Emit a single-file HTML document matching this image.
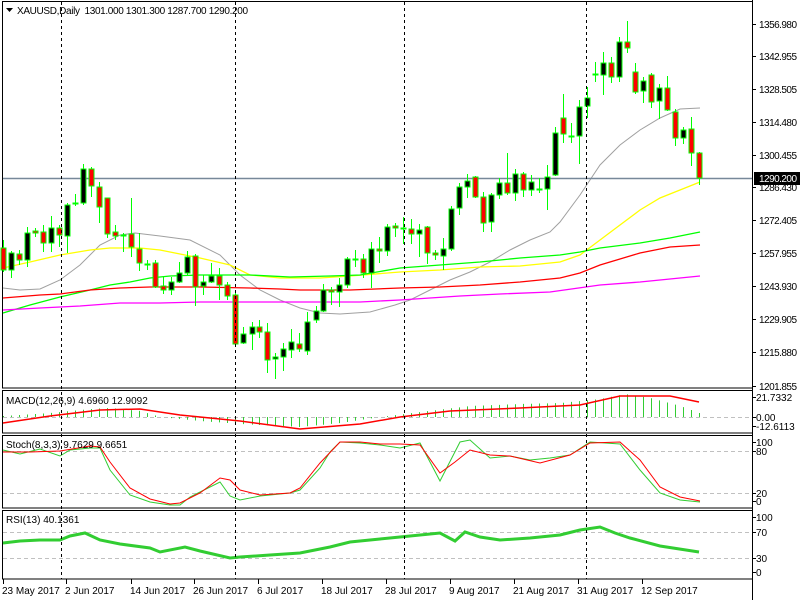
<!DOCTYPE html>
<html><head><meta charset="utf-8">
<style>
html,body{margin:0;padding:0;background:#fff;width:800px;height:600px;overflow:hidden}
svg{display:block}
text{font-family:"Liberation Sans",sans-serif;font-size:10px;fill:#000}
</style></head>
<body>
<svg id="s" width="800" height="600" xmlns="http://www.w3.org/2000/svg">
</svg>
<script>
const S=document.getElementById('s');let h='';
function pl(pts,col,w,extra){h+=`<polyline fill="none" stroke="${col}" stroke-width="${w}" ${extra||''} points="${pts.map(p=>p.join(',')).join(' ')}"/>`;}
function ln(x1,y1,x2,y2,col,w,extra){h+=`<line x1="${x1}" y1="${y1}" x2="${x2}" y2="${y2}" stroke="${col}" stroke-width="${w||1}" ${extra||''}/>`;}
function tx(x,y,t,extra){h+=`<text x="${x}" y="${y}" ${extra||''}>${t}</text>`;}
[[2.5,1.5,388],[2.5,390.5,433],[2.5,435.5,508],[2.5,510.5,579]].forEach(p=>{h+=`<rect x="${p[0]}" y="${p[1]}" width="750" height="${p[2]-p[1]}" fill="none" stroke="#000" stroke-width="1"/>`;});
[[0,532],[0,558],[0,451],[0,493],[0,417]].forEach(g=>ln(3,g[1]+.5,752,g[1]+.5,'#c0c0c0',1,'stroke-dasharray="4,3"'));
pl([[3,288],[20,290],[40,289],[60,280],[80,265],[100,245],[120,235],[135,233],[160,236],[190,240],[220,255],[240,275],[260,290],[280,300],[300,308],[320,313],[340,314],[370,312],[395,305],[410,300],[430,290],[450,280],[470,272],[490,262],[510,250],[530,240],[550,232],[560,222],[580,195],[590,180],[600,165],[620,145],[640,130],[660,118],[680,109],[700,108]],'#a0a0a0',1);
pl([[3,268],[30,262],[60,255],[90,250],[110,248],[140,248],[160,250],[200,258],[230,265],[250,275],[280,278],[320,278],[350,276],[400,272],[440,270],[480,267],[520,266],[560,262],[580,255],[600,240],[620,225],[640,210],[660,198],[680,190],[700,182]],'#ffff00',1.3);
pl([[3,313],[30,305],[60,297],[90,290],[110,285],[130,282],[150,278],[170,276],[200,275],[250,275],[290,277],[330,276],[360,275],[400,268],[440,265],[480,262],[520,258],[560,255],[580,252],[600,248],[640,243],[670,238],[700,232]],'#00ff00',1.3);
pl([[3,298],[40,295],[60,294],[90,290],[120,288],[150,287],[200,287],[250,288],[280,289],[300,290],[350,290],[400,288],[440,287],[480,285],[520,282],[560,278],[580,273],[600,265],[640,253],[670,247],[700,245]],'#ff0000',1.3);
pl([[3,310],[40,308],[80,306],[120,303],[160,303],[200,302],[250,302],[300,302],[360,302],[400,300],[430,298],[460,296],[500,294],[550,292],[600,285],[640,282],[670,279],[700,276]],'#ff00ff',1.3);
ln(3,178.5,752,178.5,'#778899',1.5);
const C=[
[3,248,270,240,272,1],[11,253,270,251,278,0],[19,254,260,250,265,1],[27,233,260,227,267,0],[35,231,233,228,237,1],[43,232,243,225,252,1],[51,228,243,216,252,0],[59,228,235,225,247,1],[67,205,236,203,253,0],[75,203,203,194,206,2],[83,169,203,164,205,0],[91,169,186,167,197,1],[99,187,207,182,223,1],[107,198,234,198,238,1],[115,232,236,225,240,1],[123,235,235,233,252,2],[131,234,247,198,257,1],[139,249,263,233,271,1],[147,264,264,260,270,2],[155,263,287,260,288,1],[163,286,290,277,294,1],[171,282,290,277,295,0],[179,273,282,262,283,0],[187,257,273,251,275,0],[195,256,287,254,306,1],[203,282,286,275,295,0],[211,276,282,263,283,0],[219,276,285,268,300,1],[227,285,296,282,300,1],[235,295,344,292,347,1],[243,334,343,327,344,0],
[252,327,334,322,350,0],[259,327,332,320,338,1],[267,332,360,323,373,1],[275,357,359,353,379,0],[283,349,357,343,371,0],[291,342,350,329,358,0],[299,344,349,333,352,1],[307,322,351,312,355,0],[316,311,320,306,323,0],[323,290,311,284,312,0],[331,290,292,287,305,1],[339,285,292,278,307,0],[347,259,285,257,288,0],[355,259,259,250,267,2],[363,259,273,254,278,1],[371,249,273,242,288,0],[379,249,251,237,263,1],[387,227,251,224,256,0],[395,226,228,223,237,1],[403,228,228,217,244,2],[411,229,234,219,244,1],[419,230,234,224,257,0],[427,227,253,226,264,1],[435,253,255,250,260,1],[443,249,256,238,270,0],[451,209,249,206,251,0],[459,187,208,183,215,0],[467,181,187,174,198,0],[475,177,197,176,198,1],[483,197,223,192,232,1],
[491,195,222,193,232,0],[499,183,195,178,199,0],[507,183,193,153,195,1],[515,174,193,169,201,0],[523,174,190,172,197,1],[531,182,190,175,196,0],[539,189,189,178,193,2],[547,177,189,165,210,0],[555,133,175,127,176,0],[563,118,134,94,143,1],[571,136,136,123,143,2],[579,107,136,100,164,0],[587,98,106,87,118,0],[595,74,74,62,82,2],[603,63,75,52,95,0],[611,63,77,57,83,1],[619,42,77,37,82,0],[627,42,48,21,53,1],[635,72,92,63,94,1],[643,81,91,77,103,0],[651,75,102,73,108,1],[659,88,101,84,119,0],[667,88,110,76,111,1],[675,112,138,109,146,1],[683,130,138,127,144,0],[691,129,153,117,166,1],[699,153,178,152,185,1]];
C.forEach(c=>{const[x,t,b,wt,wb,k]=c;ln(x+.5,wt,x+.5,wb,'#00ff00',1);
 if(k==2){ln(x-2.5,t+.5,x+3.5,t+.5,'#00ff00',2);}
 else h+=`<rect x="${x-2}" y="${t}" width="5" height="${Math.max(b-t,2)}" fill="${k?'#ff0000':'#000'}" stroke="#00ff00" stroke-width="1"/>`;});
const hv=[[3,1],[50,4],[90,8],[110,9],[140,6],[160,0],[200,-4],[240,-7],[300,-10],[340,-6],[380,0],[420,5],[470,11],[520,13],[560,14],[600,18],[625,23],[650,19],[680,11],[699,4]];
function interp(a,x){for(let i=0;i<a.length-1;i++){if(x>=a[i][0]&&x<=a[i+1][0]){const f=(x-a[i][0])/(a[i+1][0]-a[i][0]);return a[i][1]+f*(a[i+1][1]-a[i][1]);}}return a[a.length-1][1];}
C.forEach(c=>{const v=interp(hv,c[0]);if(Math.abs(v)>0.5)ln(c[0]+.5,417,c[0]+.5,417-v,'#32cd32',1);});
pl([[3,423],[50,416],[100,410],[140,409],[180,415],[240,421],[300,429],[360,424],[400,417],[450,411],[520,408],[580,405],[620,396],[670,396],[699,402]],'#ff0000',1.5);
pl([[3,450],[20,454],[40,449],[60,456],[70,450],[90,448],[100,448],[110,470],[130,495],[150,502],[170,505],[180,505],[190,497],[210,487],[220,482],[230,496],[240,500],[260,496],[290,493],[300,490],[320,468],[330,452],[340,442],[360,443],[380,445],[400,448],[420,443],[440,481],[460,442],[470,440],[490,458],[510,456],[530,460],[550,458],[570,455],[590,442],[620,444],[640,470],[660,493],[680,500],[700,502]],'#32cd32',1);
pl([[3,452],[30,452],[60,451],[90,446],[100,447],[110,462],[130,488],[150,499],[170,504],[180,503],[200,493],[220,478],[230,480],[240,490],[260,495],[290,493],[300,488],[320,463],[340,442],[360,442],[380,444],[400,444],[420,445],[440,473],[455,462],[470,450],[490,455],[510,456],[540,463],[570,455],[590,443],[620,442],[640,460],[660,487],[680,497],[700,501]],'#ff0000',1);
pl([[3,543],[20,541],[40,540],[60,540],[70,536],[85,533],[100,540],[120,544],[150,548],[160,552],[185,547],[200,551],[230,558],[240,557],[270,555],[300,553],[330,547],[350,542],[380,539],[400,537],[440,533],[455,541],[465,532],[480,537],[500,540],[530,538],[560,535],[580,530],[600,527],[615,533],[630,538],[660,546],[699,552]],'#32cd32',3);
[61,235,404,586].forEach(x=>ln(x+.5,2,x+.5,579,'#000',1,'stroke-dasharray="3,3"'));
ln(752.5,0,752.5,600,'#000',1);
[['1356.980',24],['1342.955',56],['1328.505',89],['1314.480',122],['1300.455',155],['1286.430',187],['1272.405',220],['1257.955',253],['1243.930',286],['1229.905',319],['1215.880',352],['1201.855',386]].forEach(l=>{ln(752,l[1]+.5,756,l[1]+.5,'#000',1);tx(759,l[1]+4,l[0],'textLength="38"');});
h+=`<rect x="754" y="172" width="46" height="13" fill="#000"/>`;tx(759,182,'1290.200','style="fill:#fff" textLength="38"');
[['21.7332',397],['0.00',417],['-12.6113',426]].forEach(l=>{ln(752,l[1]+.5,756,l[1]+.5,'#000',1);tx(756,l[1]+4,l[0]);});
[['100',442],['80',451],['20',493],['0',501]].forEach(l=>{ln(752,l[1]+.5,756,l[1]+.5,'#000',1);tx(756,l[1]+4,l[0]);});
[['100',517],['70',532],['30',558],['0',572]].forEach(l=>{ln(752,l[1]+.5,756,l[1]+.5,'#000',1);tx(756,l[1]+4,l[0]);});
[['23 May 2017',3],['2 Jun 2017',66],['14 Jun 2017',131],['26 Jun 2017',194],['6 Jul 2017',258],['18 Jul 2017',322],['28 Jul 2017',386],['9 Aug 2017',450],['21 Aug 2017',514],['31 Aug 2017',578],['12 Sep 2017',642]].forEach(l=>{ln(l[1]+.5,579,l[1]+.5,584,'#000',1);tx(l[1]-1,594,l[0]);});
h+=`<polygon points="6,8 13,8 9.5,12" fill="#000"/>`;
tx(17,14,'XAUUSD,Daily  1301.000 1301.300 1287.700 1290.200','xml:space="preserve" textLength="231"');
tx(6,404,'MACD(12,26,9) 4.6960 12.9092');
tx(6,448,'Stoch(8,3,3) 9.7629 9.6651');
tx(6,523,'RSI(13) 40.1361');
S.innerHTML=h;
</script>
</body></html>
